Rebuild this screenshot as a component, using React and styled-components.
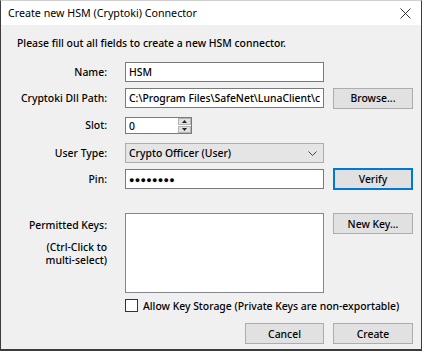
import React from "react";
import styled, { createGlobalStyle } from "styled-components";

const Global = createGlobalStyle`
  html, body {
    margin: 0;
    padding: 0;
    background: #ffffff;
  }
  body {
    font-family: "Noto Sans", "Liberation Sans", sans-serif;
    font-size: 10.4px;
    font-weight: 500;
    color: #000;
  }
`;

const Window = styled.div`
  width: 422px;
  height: 351px;
  box-sizing: border-box;
  border: 1px solid #3c3c3c;
  border-top-color: #d0d0d0;
  border-bottom-width: 2px;
  background: #f0f0f0;
  display: flex;
  flex-direction: column;
`;

const TitleBar = styled.div`
  height: 24px;
  background: #ffffff;
  display: flex;
  align-items: center;
  justify-content: space-between;
  padding: 0 10px 0 7px;
  flex-shrink: 0;
`;

const Title = styled.span`
  font-size: 10.7px;
  font-weight: 400;
`;

const Close = styled.span`
  display: flex;
  align-items: center;
`;

const Body = styled.div`
  flex: 1;
  display: flex;
  flex-direction: column;
  padding: 0 8px 0 0;
`;

const Intro = styled.div`
  height: 35px;
  display: flex;
  align-items: center;
  padding-left: 16px;
`;

const Row = styled.div`
  display: flex;
  align-items: ${(p) => p.$align || "center"};
  height: ${(p) => p.$h}px;
  margin-top: ${(p) => p.$mt || 0}px;
`;

const Label = styled.div`
  width: 106px;
  text-align: right;
  flex-shrink: 0;
  margin-right: 18px;
  line-height: 13px;
  padding-top: ${(p) => p.$pt || 0}px;
`;

const Note = styled.div`
  margin-top: 9px;
  line-height: 13px;
`;

const Field = styled.div`
  width: ${(p) => p.$w || 199}px;
  height: ${(p) => p.$h || 20}px;
  box-sizing: border-box;
  border: 1px solid #7a7a7a;
  background: #fff;
  display: flex;
  align-items: center;
  padding-left: 3px;
  flex-shrink: 0;
  white-space: nowrap;
  overflow: hidden;
`;

const Dots = styled.span`
  font-size: 9px;
  letter-spacing: 0.3px;
`;

const Spin = styled.div`
  width: 67px;
  height: 17px;
  box-sizing: border-box;
  border: 1px solid #7a7a7a;
  background: #fff;
  display: flex;
  align-items: center;
  justify-content: space-between;
  padding-left: 3px;
`;

const SpinValue = styled.span`
  color: #000;
`;

const SpinArrows = styled.div`
  width: 13px;
  height: 15px;
  display: flex;
  flex-direction: column;
  gap: 1px;
`;

const SpinBtn = styled.div`
  flex: 1;
  background: #e1e1e1;
  border: 1px solid #b4b4b4;
  display: flex;
  align-items: center;
  justify-content: center;
`;

const Select = styled.div`
  width: 199px;
  height: 20px;
  box-sizing: border-box;
  border: 1px solid #adadad;
  background: #e5e5e5;
  display: flex;
  align-items: center;
  justify-content: space-between;
  padding: 0 6px 0 3px;
`;

const Button = styled.button`
  width: ${(p) => p.$w || 80}px;
  height: ${(p) => p.$h || 21}px;
  margin-left: ${(p) => p.$ml || 9}px;
  box-sizing: border-box;
  background: #e1e1e1;
  border: 1px solid ${(p) => (p.$focus ? "#0078d7" : "#adadad")};
  box-shadow: ${(p) => (p.$focus ? "inset 0 0 0 1px #0078d7" : "none")};
  font-family: inherit;
  font-size: 10.4px;
  font-weight: 500;
  color: #000;
  padding: 0;
  flex-shrink: 0;
`;

const List = styled.div`
  width: 199px;
  height: 80px;
  box-sizing: border-box;
  border: 1px solid #828790;
  background: #fff;
  flex-shrink: 0;
`;

const Check = styled.div`
  display: flex;
  align-items: center;
  gap: 5px;
  margin-left: 124px;
  height: 13px;
  margin-top: 6px;
`;

const Box = styled.div`
  width: 13px;
  height: 13px;
  box-sizing: border-box;
  border: 1px solid #333;
  background: #fff;
`;

const Footer = styled.div`
  display: flex;
  justify-content: flex-end;
  margin-top: 11px;
`;

const Tri = ({ up }) => (
  <svg width="5" height="3" viewBox="0 0 5 3">
    <path d={up ? "M0 3 L2.5 0 L5 3 Z" : "M0 0 L2.5 3 L5 0 Z"} fill="#222" />
  </svg>
);

export default function App() {
  return (
    <>
      <Global />
      <Window>
        <TitleBar>
          <Title>Create new HSM (Cryptoki) Connector</Title>
          <Close>
            <svg width="11" height="11" viewBox="0 0 11 11">
              <path d="M0.5 0.5 L10.5 10.5 M10.5 0.5 L0.5 10.5" stroke="#333" strokeWidth="1" />
            </svg>
          </Close>
        </TitleBar>
        <Body>
          <Intro>Please fill out all fields to create a new HSM connector.</Intro>
          <Row $h={20} $mt={2}>
            <Label>Name:</Label>
            <Field>HSM</Field>
          </Row>
          <Row $h={20} $mt={6}>
            <Label>Cryptoki Dll Path:</Label>
            <Field>C:\Program Files\SafeNet\LunaClient\c</Field>
            <Button>Browse...</Button>
          </Row>
          <Row $h={17} $mt={9}>
            <Label>Slot:</Label>
            <Spin>
              <SpinValue>0</SpinValue>
              <SpinArrows>
                <SpinBtn><Tri up /></SpinBtn>
                <SpinBtn><Tri /></SpinBtn>
              </SpinArrows>
            </Spin>
          </Row>
          <Row $h={20} $mt={9}>
            <Label>User Type:</Label>
            <Select>
              <span>Crypto Officer (User)</span>
              <svg width="9" height="5" viewBox="0 0 9 5">
                <path d="M0.5 0.5 L4.5 4.5 L8.5 0.5" stroke="#444" fill="none" />
              </svg>
            </Select>
          </Row>
          <Row $h={22} $mt={5}>
            <Label>Pin:</Label>
            <Field><Dots>●●●●●●●●</Dots></Field>
            <Button $focus $h={22}>Verify</Button>
          </Row>
          <Row $h={80} $mt={23} $align="flex-start">
            <Label $pt={6}>
              Permitted Keys:
              <Note>(Ctrl-Click to<br />multi-select)</Note>
            </Label>
            <List />
            <Button>New Key...</Button>
          </Row>
          <Check>
            <Box />
            <span>Allow Key Storage (Private Keys are non-exportable)</span>
          </Check>
          <Footer>
            <Button $w={79}>Cancel</Button>
            <Button>Create</Button>
          </Footer>
        </Body>
      </Window>
    </>
  );
}
